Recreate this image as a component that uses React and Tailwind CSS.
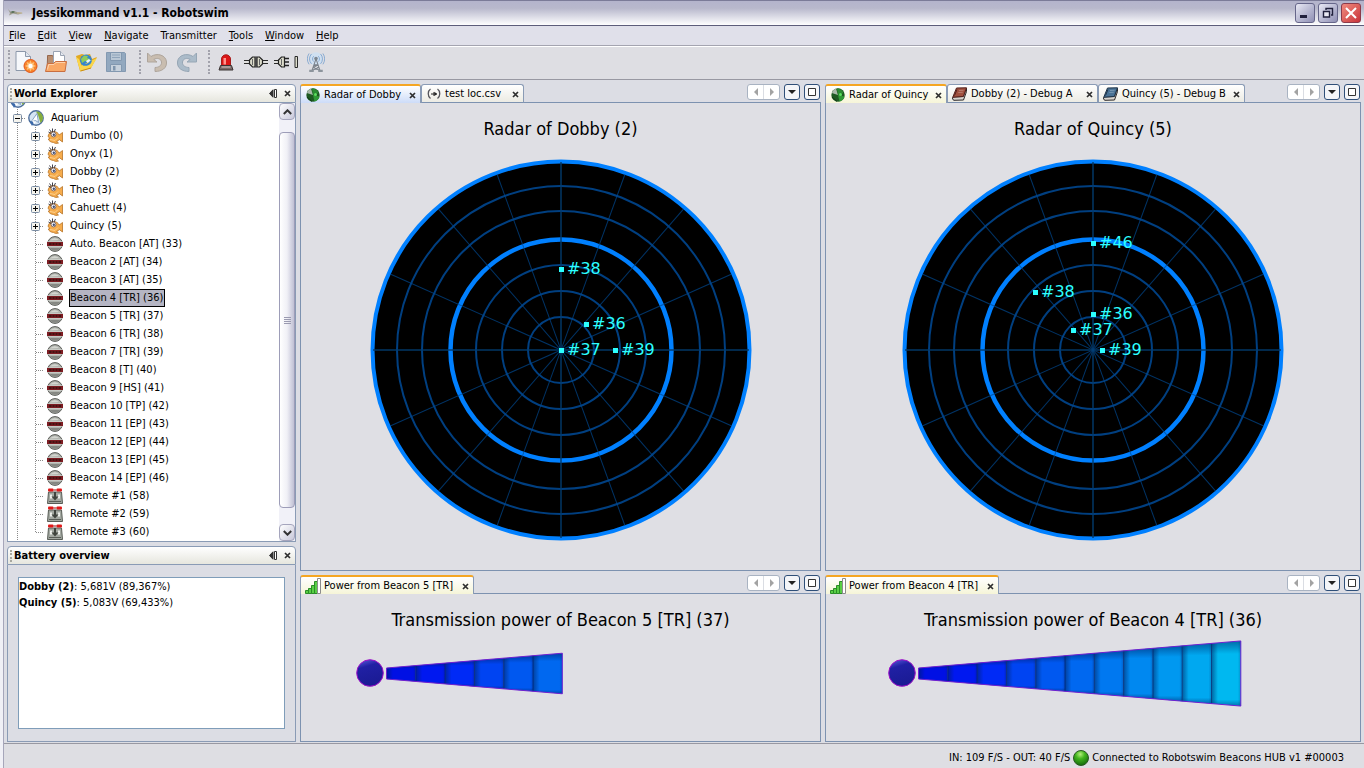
import React from "react";

/* ---------- icons ---------- */

function AppIcon() {
  return (
    <svg width="18" height="10" viewBox="0 0 18 10" aria-hidden="true">
      <path d="M2 1l3 3 3-1 3 1 6 1-5 1.500-5-1-4 2 1-2.500z" fill="#9c9b8c" />
      <path d="M4 4l3-1 2 1-2 1z" fill="#4f6a52" />
      <path d="M11 5h5" stroke="#c9b98f" />
    </svg>
  );
}

function NewIcon() {
  return (
    <svg width="24" height="24" viewBox="0 0 24 24" aria-hidden="true">
      <path d="M2 1.500h9.500l5 5v14H2z" fill="#f6f8fb" stroke="#8c98aa" />
      <path d="M11.500 1.500v5h5" fill="#dfe5ee" stroke="#8c98aa" />
      <circle cx="16.500" cy="16" r="6.500" fill="#f9842a" stroke="#e0561a" />
      <path d="M16.500 10.500l1.200 2.600 2.700-1-1 2.700 2.600 1.200-2.600 1.200 1 2.700-2.700-1-1.200 2.600-1.200-2.600-2.700 1 1-2.700-2.600-1.200 2.600-1.200-1-2.700 2.700 1z" fill="#fdc27c" />
      <circle cx="16.500" cy="16" r="2.200" fill="#fff" />
    </svg>
  );
}

function OpenIcon() {
  return (
    <svg width="24" height="24" viewBox="0 0 24 24" aria-hidden="true">
      <path d="M3.500 9V5.500h5L10 8h10v12H3z" fill="#b98d6e" stroke="#96674c" />
      <path d="M9.500 1.500h7l4 4v9h-11z" fill="#fff" stroke="#9aa3b2" />
      <path d="M16.500 1.500v4h4" fill="#e5e9f0" stroke="#9aa3b2" />
      <path d="M1.500 21.500l2-8h6l2-2h11l-1.500 10z" fill="#f9a866" stroke="#c96f40" />
      <path d="M3.500 19.500l1.200-5h5.300l2-2h9" fill="none" stroke="#fdd2ac" />
    </svg>
  );
}

function GlobeFolderIcon() {
  return (
    <svg width="24" height="24" viewBox="0 0 24 24" aria-hidden="true">
      <path d="M2 6l6-2 3 1 5-1 2 5 5-2-6 11-11 3z" fill="#e2a821" />
      <circle cx="12" cy="10.500" r="6" fill="#3485cf" />
      <path d="M7 9l3-3.500 4 .5-1 2 3 1-2 3-3-1-3 2z" fill="#8fcc5c" />
      <path d="M12 11l3-2 2 2-3 3z" fill="#e5f3ff" />
      <path d="M2 7l3 2 2.500 6.500L23 8l-6 10-10.500 3.500z" fill="#fad64b" />
      <path d="M9 14.500a6 5 0 0 0 8-3.500" fill="none" stroke="#3485cf" strokeWidth="2" />
      <path d="M6.500 21L17 18" stroke="#c98a14" />
    </svg>
  );
}

function SaveIcon() {
  return (
    <svg width="22" height="22" viewBox="0 0 22 22" aria-hidden="true">
      <path d="M1.500 1.500h18l1 1v18h-19z" fill="#92a8bf" stroke="#8399b1" />
      <path d="M5.500 1.500h11v8h-11z" fill="#b9c7d5" stroke="#8298b0" />
      <path d="M7 4h8M7 6.500h8" stroke="#8fa4ba" />
      <path d="M5.500 13.500h11v7h-11z" fill="#c7d1dc" stroke="#8298b0" />
      <path d="M8 15h2.500v4.500H8z" fill="#7f95ad" />
    </svg>
  );
}

function UndoIcon() {
  return (
    <svg width="22" height="22" viewBox="0 0 22 22" aria-hidden="true">
      <path d="M1.500 2v9h9.500L7.800 8.500C11 6.500 15 7.500 15.500 11c.5 3.500-3 5.500-6.500 5.500v4c7 0 12-3.500 11.500-9.500C20 4 11 1.500 5 5.500z" fill="#c9bdb0" stroke="#aea59c" />
    </svg>
  );
}

function RedoIcon() {
  return (
    <svg width="22" height="22" viewBox="0 0 22 22" aria-hidden="true">
      <path d="M20.500 2v9H11l3.200-2.500C11 6.500 7 7.500 6.500 11c-.5 3.500 3 5.500 6.500 5.500v4C6 20.500 1 17 1.500 11 2 4 11 1.500 17 5.500z" fill="#abbbc9" stroke="#96a6b5" />
    </svg>
  );
}

function SirenIcon() {
  return (
    <svg width="16" height="17" viewBox="0 0 16 17" aria-hidden="true">
      <path d="M3.500 12V5a4.500 4.200 0 0 1 9 0v7z" fill="#dc1616" stroke="#a81c1c" />
      <path d="M5.500 4H8v6.500H5.500z" fill="#ff958e" />
      <path d="M2.500 11.500h11l1.500 4.500H1z" fill="#7a6a68" stroke="#3a3434" />
      <path d="M3.500 13h9" stroke="#d5cac8" />
    </svg>
  );
}

function PlugJoinedIcon() {
  return (
    <svg width="26" height="14" viewBox="0 0 26 14" aria-hidden="true">
      <path d="M1 5.500h6M1 8.500h6M19 5.500h6M19 8.500h6" stroke="#2a2a2a" />
      <path d="M1 7h24" stroke="#e4e4dc" />
      <path d="M6.500 5l3-3h2.500v10H9.500l-3-3zM19.500 5l-3-3H14v10h2.500l3-3z" fill="#dcdccb" stroke="#222" strokeWidth="1.200" />
      <path d="M13 1.500v11" stroke="#222" />
      <path d="M9.500 4v6M16.500 4v6" stroke="#666" />
    </svg>
  );
}

function PlugSplitIcon() {
  return (
    <svg width="26" height="14" viewBox="0 0 26 14" aria-hidden="true">
      <path d="M1 5.500h5M1 8.500h5" stroke="#2a2a2a" />
      <path d="M1 7h5" stroke="#e4e4dc" />
      <path d="M5.500 5l3-3h3v10h-3l-3-3z" fill="#dcdccb" stroke="#222" strokeWidth="1.200" />
      <path d="M8.500 4v6" stroke="#666" />
      <path d="M12 3.500h4M12 7h4M12 10.500h4" stroke="#222" strokeWidth="1.300" />
      <path d="M24.500 1.500h-2.500v11h2.500z" fill="#dcdccb" stroke="#2a2a2a" />
    </svg>
  );
}

function AntennaIcon() {
  return (
    <svg width="18" height="21" viewBox="0 0 20 22" aria-hidden="true">
      <circle cx="10" cy="7" r="7.500" fill="#d0e0f1" />
      <path d="M5 1.500a8 8 0 0 0 0 11M15 1.500a8 8 0 0 1 0 11M2.300 1a11 11 0 0 0 0 12M17.700 1a11 11 0 0 1 0 12M7.500 4a4 4 0 0 0 0 6M12.500 4a4 4 0 0 1 0 6" fill="none" stroke="#7fa5cf" />
      <circle cx="10" cy="6.500" r="2" fill="#7d8792" />
      <path d="M10 7L5.500 20M10 7l4.500 13M8 13.500h4M7 16.500l5.500-3M13 16.500l-5.500-3M6 19.500l7-3M14 19.500l-7-3" fill="none" stroke="#7b838c" strokeWidth="1.200" />
      <path d="M2.500 19h5v2.500h-5zM12.500 19h5v2.500h-5z" fill="#8c949c" />
    </svg>
  );
}

function AquariumIcon() {
  return (
    <svg width="16" height="16" viewBox="0 0 16 16" aria-hidden="true">
      <circle cx="8" cy="8" r="7.200" fill="#d5e4f3" stroke="#4e6f9c" strokeWidth="1.400" />
      <path d="M8 1.500a6.500 6.500 0 0 1 4.500 11.500L10 5z" fill="#86ae3c" />
      <path d="M3 12L9 3.500l1.500 9-3-2z" fill="#fff" stroke="#6d8fb5" strokeWidth="0.800" />
      <path d="M1.500 11l2.500 5 2.500-4z" fill="#3a69ab" />
      <path d="M4 10.500l2 3.500 2-2z" fill="#fff" />
    </svg>
  );
}

function FishIcon() {
  return (
    <svg width="16" height="16" viewBox="0 0 16 16" aria-hidden="true">
      <path d="M1 8.500C1.500 5 4 3.500 6.500 3.500c3.200 0 4.800 1.800 5.700 3.500l3.300-2.500v9.500l-3.300-2.500c-.8 1.200-1.700 1.800-2.700 2.200l2 1.300c-1.500.7-3.500.5-5-.5C4 14.300 1.800 13 1.300 11l1.700-.6z" fill="#f6ac4c" stroke="#b87428" strokeWidth="0.800" />
      <path d="M3 11.500l5 1 3-3" fill="none" stroke="#fdd08c" />
      <path d="M2.500 1.500l2 3M5.500.5V4M8.500 1L7 4M1.500 4L4 5.500" stroke="#2b2b38" strokeWidth="0.900" />
      <circle cx="6.500" cy="6.500" r="2.400" fill="#fff" stroke="#6b5a60" strokeWidth="0.800" />
      <circle cx="6.800" cy="6.700" r="1.200" fill="#3f4c74" />
    </svg>
  );
}

function BeaconIcon() {
  return (
    <svg width="16" height="16" viewBox="0 0 16 16" aria-hidden="true">
      <circle cx="8" cy="8" r="7.400" fill="#b0b3ad" stroke="#5b5d59" />
      <path d="M3 4.500A6 6 0 0 1 12 4z" fill="#d4d6d0" />
      <path d="M2.500 12h11a7 7 0 0 1-11 0z" fill="#858782" />
      <path d="M0 5.700h16M0 10.300h16" stroke="#d9dbd6" strokeWidth="0.700" />
      <path d="M0 6h16v4H0z" fill="#7c1c22" />
      <path d="M2 8h2.500M5.500 8h2M8.500 8h2M11.500 8H14" stroke="#30100f" strokeWidth="1.500" />
    </svg>
  );
}

function RemoteIcon() {
  return (
    <svg width="16" height="16" viewBox="0 0 16 16" aria-hidden="true">
      <path d="M1.500 4h13l1 11.500h-15z" fill="#a3a8a1" stroke="#585c56" />
      <path d="M3 6.500h2v4H3zM11 6.500h2v4h-2z" fill="#eef0ec" />
      <rect x="1" y="0.500" width="5.500" height="3" rx="1" fill="#e01818" />
      <rect x="9.500" y="0.500" width="5.500" height="3" rx="1" fill="#e01818" />
      <path d="M6.500 2h3" stroke="#911" />
      <path d="M7 4h2v4.500h2.500L8 12.500 4.500 8.500H7z" fill="#40443e" />
      <path d="M2 13.500h12" stroke="#5a5e58" />
    </svg>
  );
}

function RadarIcon() {
  return (
    <svg width="14" height="14" viewBox="0 0 14 14" aria-hidden="true">
      <circle cx="7" cy="7" r="6.700" fill="#1d5a22" />
      <path d="M7 7L.8 5A6.700 6.700 0 0 1 5 .6z" fill="#a9b9aa" />
      <path d="M7 7L6 .5A6.600 6.600 0 0 1 12.500 5z" fill="#2a8a32" />
      <path d="M7 7l6.500 1.500a6.700 6.700 0 0 1-5 5z" fill="#2f9a36" />
      <circle cx="9.500" cy="6.500" r="1.500" fill="#5de060" />
      <path d="M1 9l5 4.500" stroke="#103a14" />
    </svg>
  );
}

function SignalFileIcon() {
  return (
    <svg width="14" height="12" viewBox="0 0 14 12" aria-hidden="true">
      <path d="M3.500 1C.5 3 .5 8.500 3.500 10.500M10.500 1c3 2 3 7.500 0 9.500" fill="none" stroke="#55555b" strokeWidth="1.300" />
      <path d="M4 6h6M7 4v4" stroke="#222" />
      <path d="M7.500 3.800L10 6 7.500 8z" fill="#222" />
    </svg>
  );
}

function BookIcon({ cover, edge }) {
  return (
    <svg width="17" height="14" viewBox="0 0 17 14" aria-hidden="true">
      <path d="M2 10L12.300 9.500 15.500 1v3.500L12.500 13l-9.500.3c-1.500-.5-2-2-1-3.300z" fill="#d8d4ce" stroke="#2c2828" />
      <path d="M5.500 1L15.500.8 12.300 9.500 1.800 10.200z" fill={cover} stroke={edge} />
      <path d="M6 2.500l-2.500 6" stroke={edge} />
      <path d="M8 3.500l4.500-.2M7.300 5.500l4.500-.2" stroke="#fff" strokeOpacity="0.250" />
    </svg>
  );
}

function BarsIcon() {
  return (
    <svg width="16" height="16" viewBox="0 0 16 16" aria-hidden="true">
      <path d="M0.500 12.500h3v3h-3zM3.500 10.500h3v5h-3zM6.500 7.500h3v8h-3zM9.500 3.500h3v12h-3z" fill="#59cf45" stroke="#2b8d27" />
      <path d="M12.500.5h3v15h-3z" fill="#fff" stroke="#8c8c8c" />
    </svg>
  );
}

function CloseGlyph() {
  return (
    <svg width="7" height="7" viewBox="0 0 7 7" aria-hidden="true">
      <path d="M1 1l5 5M6 1L1 6" stroke="#2e2e2e" strokeWidth="1.700" />
    </svg>
  );
}

function MinimizeGlyph() {
  return (
    <svg width="9" height="9" viewBox="0 0 9 9" aria-hidden="true">
      <path d="M4 .8v7.400L.5 4.500z" fill="#333" stroke="#333" />
      <path d="M5.500.500h2v8h-2z" fill="#fff" stroke="#333" />
    </svg>
  );
}

/* ---------- world explorer ---------- */

const branches = ["Dumbo (0)", "Onyx (1)", "Dobby (2)", "Theo (3)", "Cahuett (4)", "Quincy (5)"];
const beacons = [
  "Auto. Beacon [AT] (33)",
  "Beacon 2 [AT] (34)",
  "Beacon 3 [AT] (35)",
  "Beacon 4 [TR] (36)",
  "Beacon 5 [TR] (37)",
  "Beacon 6 [TR] (38)",
  "Beacon 7 [TR] (39)",
  "Beacon 8 [T] (40)",
  "Beacon 9 [HS] (41)",
  "Beacon 10 [TP] (42)",
  "Beacon 11 [EP] (43)",
  "Beacon 12 [EP] (44)",
  "Beacon 13 [EP] (45)",
  "Beacon 14 [EP] (46)",
];
const remotes = ["Remote #1 (58)", "Remote #2 (59)", "Remote #3 (60)"];

function Guide({ branch, last, box }) {
  return (
    <svg className="shrink-0" width="18" height="18" viewBox="0 0 18 18" aria-hidden="true">
      <path d={last ? "M9.500 0v9" : "M9.500 0v18"} stroke="#8a8a8a" strokeDasharray="1 1" />
      {branch && <path d="M10 9.500h8" stroke="#8a8a8a" strokeDasharray="1 1" />}
      {box && (
        <>
          <rect x="5.500" y="5.500" width="8" height="8" rx="1" fill="#f5f4ee" stroke="#7a8ca3" />
          <path d={box === "plus" ? "M7 9.500h5M9.500 7v5" : "M7 9.500h5"} stroke="#000" />
        </>
      )}
    </svg>
  );
}

function TreeRow({ label, Icon, box, last, selected }) {
  return (
    <li className="flex h-[18px] shrink-0 items-center" role="treeitem" aria-selected={!!selected}>
      <Guide />
      <Guide branch last={last} box={box} />
      <span className="ml-[3px] shrink-0">
        <Icon />
      </span>
      <span
        className={
          selected
            ? "ml-[6px] border border-black bg-[#b5b5c3] pr-px leading-4 whitespace-nowrap"
            : "ml-[7px] leading-4 whitespace-nowrap"
        }
      >
        {label}
      </span>
    </li>
  );
}

function ScrollButton({ up }) {
  return (
    <button
      type="button"
      aria-label={up ? "Scroll up" : "Scroll down"}
      className="flex h-[17px] w-full items-center justify-center rounded-sm border border-[#a5a5bd] bg-linear-to-br from-white to-[#c8c8da]"
    >
      <svg width="9" height="6" viewBox="0 0 9 6" aria-hidden="true">
        <path d={up ? "M.8 5l3.700-3.700L8.200 5" : "M.8 1l3.700 3.700L8.200 1"} fill="none" stroke="#333" strokeWidth="2" />
      </svg>
    </button>
  );
}

function PanelHeader({ title }) {
  return (
    <header className="flex h-[19px] shrink-0 items-center rounded-t border border-[#8a9bb5] bg-linear-to-b from-white to-[#e6e6de] pr-1">
      <span className="ml-[2px] h-3 border-l-2 border-dotted border-[#a8a8a0]" />
      <h2 className="ml-[2px] text-[11px] leading-4 font-bold">{title}</h2>
      <button type="button" aria-label={"Minimize " + title} className="mr-[6px] ml-auto">
        <MinimizeGlyph />
      </button>
      <button type="button" aria-label={"Close " + title}>
        <CloseGlyph />
      </button>
    </header>
  );
}

function WorldExplorer() {
  return (
    <section className="flex min-h-0 flex-1 flex-col">
      <PanelHeader title="World Explorer" />
      <div className="flex min-h-0 flex-1 border-x border-b border-[#8a9bb5] bg-white">
        <ul role="tree" aria-label="World" className="flex min-w-0 flex-1 flex-col justify-end overflow-hidden">
          <li className="flex h-[18px] shrink-0 items-center" aria-hidden="true">
            <span className="ml-[2px]">
              <AquariumIcon />
            </span>
          </li>
          <li className="flex h-[18px] shrink-0 items-center" role="treeitem" aria-expanded="true" aria-selected="false">
            <Guide branch box="minus" />
            <span className="ml-[2px] shrink-0">
              <AquariumIcon />
            </span>
            <span className="ml-[7px] leading-4">Aquarium</span>
          </li>
          {branches.map((b) => (
            <TreeRow key={b} label={b} Icon={FishIcon} box="plus" />
          ))}
          {beacons.map((b) => (
            <TreeRow key={b} label={b} Icon={BeaconIcon} selected={b.includes("(36)")} />
          ))}
          {remotes.map((r, i) => (
            <TreeRow key={r} label={r} Icon={RemoteIcon} last={i === remotes.length - 1} />
          ))}
        </ul>
        <div className="flex w-4 shrink-0 flex-col bg-[#f1f1f8]">
          <ScrollButton up />
          <div className="flex min-h-0 flex-1 flex-col pt-3 pb-4">
            <div className="flex flex-1 flex-col items-center justify-center gap-px rounded-sm border border-[#9d9db8] bg-linear-to-r from-white via-[#f0f0f6] to-[#c0c0d4]">
              <span className="h-px w-[7px] bg-[#9a9ab0]" />
              <span className="h-px w-[7px] bg-[#9a9ab0]" />
              <span className="h-px w-[7px] bg-[#9a9ab0]" />
              <span className="h-px w-[7px] bg-[#9a9ab0]" />
            </div>
          </div>
          <ScrollButton />
        </div>
      </div>
    </section>
  );
}

function BatteryOverview() {
  return (
    <section className="flex shrink-0 flex-col">
      <PanelHeader title="Battery overview" />
      <div className="border-x border-b border-[#8a9bb5] px-[10px] pt-3 pb-3">
        <div className="min-h-[152px] border border-[#7f9db9] bg-white pt-px leading-4">
          <p>
            <b>Dobby (2)</b>: 5,681V (89,367%)
          </p>
          <p>
            <b>Quincy (5)</b>: 5,083V (69,433%)
          </p>
        </div>
      </div>
    </section>
  );
}

/* ---------- tabbed panes ---------- */

function Tab({ label, icon, active, tone, width }) {
  const look = active
    ? "border-t-2 border-t-[#f5a623] " + tone
    : "border-t border-b border-t-[#8a9bb5] border-b-[#7d92b0] bg-linear-to-b from-white to-[#ecebe3]";
  return (
    <div
      className={
        "flex h-[19px] shrink-0 items-center rounded-t-[3px] border-r border-l border-r-[#8a9bb5] border-l-[#8a9bb5] pr-1 " +
        look +
        " " +
        width
      }
    >
      <button type="button" role="tab" aria-selected={!!active} className="flex h-4 min-w-0 flex-1 items-center whitespace-nowrap">
        <span className="flex w-[23px] shrink-0 justify-center">{icon}</span>
        <span className="leading-4">{label}</span>
      </button>
      <button type="button" aria-label={"Close " + label} className="mt-[2px]">
        <CloseGlyph />
      </button>
    </div>
  );
}

function StripButtons() {
  return (
    <div className="ml-auto flex items-center gap-1 pr-px">
      <div className="flex h-4 w-[33px] rounded-[3px] border border-[#a9b3c2] bg-white">
        <button type="button" aria-label="Previous tab" className="flex flex-1 items-center justify-center border-r border-[#dadde3]">
          <svg width="4" height="8" viewBox="0 0 4 8" aria-hidden="true">
            <path d="M4 0v8L0 4z" fill="#a3a3a3" />
          </svg>
        </button>
        <button type="button" aria-label="Next tab" className="flex flex-1 items-center justify-center">
          <svg width="4" height="8" viewBox="0 0 4 8" aria-hidden="true">
            <path d="M0 0v8l4-4z" fill="#a3a3a3" />
          </svg>
        </button>
      </div>
      <button type="button" aria-label="List tabs" className="flex size-4 items-center justify-center rounded-[3px] border border-[#2f4f78] bg-[#f4f5f8]">
        <svg width="8" height="4" viewBox="0 0 8 4" aria-hidden="true">
          <path d="M0 0h8L4 4z" fill="#222" />
        </svg>
      </button>
      <button type="button" aria-label="Maximize" className="flex size-4 items-center justify-center rounded-[3px] border border-[#2f4f78] bg-[#f4f5f8]">
        <svg width="8" height="8" viewBox="0 0 8 8" aria-hidden="true">
          <path d="M.5.500h7v7h-7z" fill="#fff" stroke="#333" />
        </svg>
      </button>
    </div>
  );
}

function Pane({ tabs, title, grow, children }) {
  return (
    <section className={grow ? "flex min-h-0 flex-1 flex-col" : "flex shrink-0 flex-col"}>
      <div className="flex h-[19px] shrink-0" role="tablist">
        {tabs}
        <div className="flex flex-1 items-start border-b border-[#7d92b0]">
          <StripButtons />
        </div>
      </div>
      <div className="flex min-h-0 flex-1 flex-col items-center border-x border-b border-[#7d92b0] bg-[#dfdfe4] pt-[14px]">
        <h3 className="text-[18px] leading-6 whitespace-nowrap">{title}</h3>
        {children}
      </div>
    </section>
  );
}

/* ---------- charts ---------- */

const rings = [33, 59, 85, 139, 164];
const spokes = [20, 41, 66, 114, 139, 160];

function Radar({ points, name }) {
  return (
    <svg className="mt-[18px] shrink-0" width="382" height="382" viewBox="-191 -191 382 382" role="img" aria-label={name}>
      <circle r="188.500" fill="#000" stroke="#0080ff" strokeWidth="4" />
      {rings.map((r) => (
        <circle key={r} r={r} fill="none" stroke="#003f80" strokeWidth="2" />
      ))}
      <circle r="110.500" fill="none" stroke="#0080ff" strokeWidth="4.500" />
      {spokes.map((a) => (
        <path key={a} d="M0-187V187" transform={"rotate(" + a + ")"} stroke="#004890" strokeOpacity="0.700" />
      ))}
      <path d="M0-188V188M-188 0H188" stroke="#023a6c" strokeOpacity="0.700" strokeWidth="2" />
      {points.map(([label, x, y]) => (
        <g key={label} fill="#2cffff">
          <rect x={x - 2} y={y - 2} width="5" height="5" />
          <text x={x + 6} y={y + 5} className="font-['DejaVu_Sans',sans-serif] text-[16px]">
            {label}
          </text>
        </g>
      ))}
    </svg>
  );
}

const shades = [
  "#0010e4", "#0018f0", "#002af6", "#0044f2", "#0058f0", "#0068f0",
  "#0078f0", "#0088f0", "#0098f0", "#00a8f0", "#00b8f0",
];

function PowerChart({ level, name, id }) {
  const step = 29.3;
  const half = (x) => 5.5 + x * 0.084;
  return (
    <svg className="mt-2 mb-[33px] shrink-0" width="410" height="68" viewBox="0 0 410 68" role="img" aria-label={name}>
      <defs>
        <linearGradient id={id + "side"} x1="0" x2="1" y1="0" y2="0">
          <stop offset="0" stopColor="#002060" stopOpacity="0.550" />
          <stop offset="0.220" stopColor="#002060" stopOpacity="0" />
          <stop offset="0.900" stopColor="#002060" stopOpacity="0" />
          <stop offset="1" stopColor="#002060" stopOpacity="0.250" />
        </linearGradient>
        <linearGradient id={id + "edge"} x1="0" x2="0" y1="0" y2="1">
          <stop offset="0" stopColor="#002060" stopOpacity="0.500" />
          <stop offset="0.200" stopColor="#002060" stopOpacity="0" />
          <stop offset="0.900" stopColor="#002060" stopOpacity="0" />
          <stop offset="1" stopColor="#002060" stopOpacity="0.450" />
        </linearGradient>
        <linearGradient id={id + "ball"} x1="0.300" x2="0.600" y1="0" y2="1">
          <stop offset="0" stopColor="#5050d0" />
          <stop offset="0.250" stopColor="#2020a4" />
          <stop offset="1" stopColor="#1a1a92" />
        </linearGradient>
      </defs>
      <circle cx="14" cy="33" r="13.300" fill={"url(#" + id + "ball)"} stroke="#a010c8" />
      {shades.slice(0, level).map((c, i) => {
        const x0 = i * step;
        const x1 = x0 + step;
        const d =
          "M" + (30.5 + x0) + " " + (33.5 - half(x0)) + "L" + (30.5 + x1) + " " + (33.5 - half(x1)) +
          "V" + (33.5 + half(x1)) + "L" + (30.5 + x0) + " " + (33.5 + half(x0)) + "z";
        return (
          <g key={c}>
            <path d={d} fill={c} />
            <path d={d} fill={"url(#" + id + "side)"} />
            <path d={d} fill={"url(#" + id + "edge)"} />
            <path d={"M" + (30.5 + x0) + " " + (33.5 - half(x0)) + "V" + (33.5 + half(x0))} stroke="#00246c" strokeOpacity="0.700" />
          </g>
        );
      })}
      <path
        d={
          "M30.500 28L" + (30.5 + level * step) + " " + (33.5 - half(level * step)) +
          "V" + (33.5 + half(level * step)) + "L30.500 39z"
        }
        fill="none"
        stroke="#7020d0"
      />
    </svg>
  );
}

/* ---------- window chrome ---------- */

const menus = [
  ["F", "ile"],
  ["E", "dit"],
  ["V", "iew"],
  ["N", "avigate"],
  ["", "Transmitter"],
  ["T", "ools"],
  ["W", "indow"],
  ["H", "elp"],
];

function Grip() {
  return <span className="h-6 w-[3px] shrink-0 border-l-2 border-dotted border-[#a2a2ac]" />;
}

function ToolButton({ label, children }) {
  return (
    <button type="button" aria-label={label} className="flex h-7 w-[30px] shrink-0 items-center justify-center">
      {children}
    </button>
  );
}

function TitleBar() {
  return (
    <header className="flex h-[26px] shrink-0 items-center border-t border-b border-t-[#7b7b98] border-b-[#5d5d7a] bg-linear-to-b from-[#b4b4cc] via-[#b8b8cc] via-30% to-white pr-[3px] pl-[2px]">
      <AppIcon />
      <h1 className="ml-2 text-[12px] leading-5 font-bold whitespace-nowrap">Jessikommand v1.1 - Robotswim</h1>
      <div className="ml-auto flex gap-[3px]">
        <button type="button" aria-label="Minimize" className="flex size-5 items-end justify-start rounded-[3px] border border-[#66668a] bg-linear-to-br from-[#e9e9f4] to-[#8f8fb4] p-1">
          <span className="h-[3px] w-[7px] bg-[#20203c]" />
        </button>
        <button type="button" aria-label="Restore" className="flex size-5 items-center justify-center rounded-[3px] border border-[#66668a] bg-linear-to-br from-[#e9e9f4] to-[#8f8fb4]">
          <svg width="12" height="12" viewBox="0 0 12 12" aria-hidden="true">
            <path d="M4 3V1.500h6.500V8H9" fill="none" stroke="#20203c" strokeWidth="1.400" />
            <path d="M1.500 4.500h6v5.500h-6z" fill="#e8e8f2" stroke="#20203c" strokeWidth="1.400" />
          </svg>
        </button>
        <button type="button" aria-label="Close" className="flex size-5 items-center justify-center rounded-[3px] border border-[#8c3a4a] bg-linear-to-br from-[#f08a80] to-[#c8303a]">
          <svg width="12" height="12" viewBox="0 0 12 12" aria-hidden="true">
            <path d="M1 1l10 10M11 1L1 11" stroke="#fff" strokeWidth="2" />
          </svg>
        </button>
      </div>
    </header>
  );
}

function MenuBar() {
  return (
    <nav className="flex h-5 shrink-0 items-center gap-3 border-b border-[#a4a4b0] bg-[#e0e0ea] pl-[5px]">
      {menus.map(([key, rest]) => (
        <button key={key + rest} type="button" className="leading-4">
          {key && <span className="underline">{key}</span>}
          {rest}
        </button>
      ))}
    </nav>
  );
}

function Toolbar() {
  return (
    <div className="flex h-[34px] shrink-0 items-center border-t border-b border-t-white border-b-[#9898a2] bg-[#dedee3] pb-[2px] pl-1">
      <Grip />
      <ToolButton label="New"><NewIcon /></ToolButton>
      <ToolButton label="Open"><OpenIcon /></ToolButton>
      <ToolButton label="Open world"><GlobeFolderIcon /></ToolButton>
      <ToolButton label="Save"><SaveIcon /></ToolButton>
      <span className="w-2" />
      <Grip />
      <ToolButton label="Undo"><UndoIcon /></ToolButton>
      <ToolButton label="Redo"><RedoIcon /></ToolButton>
      <span className="w-[6px]" />
      <Grip />
      <ToolButton label="Alarm"><SirenIcon /></ToolButton>
      <ToolButton label="Connect"><PlugJoinedIcon /></ToolButton>
      <ToolButton label="Disconnect"><PlugSplitIcon /></ToolButton>
      <ToolButton label="Transmit"><AntennaIcon /></ToolButton>
    </div>
  );
}

function StatusBar() {
  return (
    <footer className="flex h-[25px] shrink-0 items-center justify-end gap-[3px] border-t border-[#9898a2] bg-[#dedee3] pt-1 pr-5">
      <span className="leading-4">IN: 109 F/S - OUT: 40 F/S</span>
      <svg width="16" height="16" viewBox="0 0 16 16" aria-hidden="true">
        <defs>
          <radialGradient id="led" cx="0.450" cy="0.250" r="0.750">
            <stop offset="0" stopColor="#b4ee7c" />
            <stop offset="0.400" stopColor="#43b61e" />
            <stop offset="1" stopColor="#14690c" />
          </radialGradient>
        </defs>
        <circle cx="8" cy="8" r="7.500" fill="url(#led)" stroke="#2a5a24" />
      </svg>
      <span className="leading-4">Connected to Robotswim Beacons HUB v1 #00003</span>
    </footer>
  );
}

const blue = "bg-linear-to-b from-white to-[#cddcf8]";
const cream = "bg-linear-to-b from-white to-[#f6f5d8]";

export default function App() {
  return (
    <div className="flex h-screen bg-[#e4e4ec] font-['DejaVu_Sans_Condensed','DejaVu_Sans',sans-serif] text-[11px] text-black">
      <div className="w-1 shrink-0 border-r border-[#a6a6ba] bg-[#f0f0f6]" />
      <div className="flex min-w-0 flex-1 flex-col bg-[#dcdde4]">
        <TitleBar />
        <MenuBar />
        <Toolbar />
        <main className="grid min-h-0 flex-1 grid-cols-[289px_521fr_536fr] gap-1 pt-1 pr-[3px] pb-px pl-[3px]">
          <div className="flex min-h-0 flex-col gap-1">
            <WorldExplorer />
            <BatteryOverview />
          </div>
          <div className="flex min-h-0 min-w-0 flex-col gap-1">
            <Pane
              grow
              title="Radar of Dobby (2)"
              tabs={
                <>
                  <Tab active tone={blue} width="w-[121px]" label="Radar of Dobby" icon={<RadarIcon />} />
                  <Tab width="w-[103px]" label="test loc.csv" icon={<SignalFileIcon />} />
                </>
              }
            >
              <Radar name="Radar of Dobby" points={[["#38", 0, -81], ["#36", 25, -26], ["#37", 0, 0], ["#39", 54, 0]]} />
            </Pane>
            <Pane
              title="Transmission power of Beacon 5 [TR] (37)"
              tabs={<Tab active tone={cream} width="w-[174px]" label="Power from Beacon 5 [TR]" icon={<BarsIcon />} />}
            >
              <PowerChart id="b5" name="Power of Beacon 5" level={6} />
            </Pane>
          </div>
          <div className="flex min-h-0 min-w-0 flex-col gap-1">
            <Pane
              grow
              title="Radar of Quincy (5)"
              tabs={
                <>
                  <Tab active tone={cream} width="w-[122px]" label="Radar of Quincy" icon={<RadarIcon />} />
                  <Tab width="w-[151px]" label="Dobby (2) - Debug A" icon={<BookIcon cover="#a0503e" edge="#54201c" />} />
                  <Tab width="w-[147px]" label="Quincy (5) - Debug B" icon={<BookIcon cover="#4a7396" edge="#1e3348" />} />
                </>
              }
            >
              <Radar
                name="Radar of Quincy"
                points={[["#46", 0, -107], ["#38", -58, -58], ["#36", 0, -36], ["#37", -20, -20], ["#39", 9, 0]]}
              />
            </Pane>
            <Pane
              title="Transmission power of Beacon 4 [TR] (36)"
              tabs={<Tab active tone={cream} width="w-[174px]" label="Power from Beacon 4 [TR]" icon={<BarsIcon />} />}
            >
              <PowerChart id="b4" name="Power of Beacon 4" level={11} />
            </Pane>
          </div>
        </main>
        <StatusBar />
      </div>
    </div>
  );
}
